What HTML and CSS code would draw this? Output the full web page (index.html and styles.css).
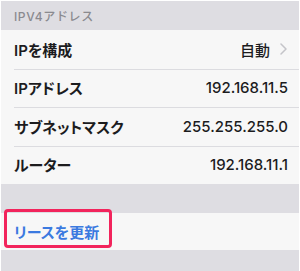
FILE: index.html
```html
<!DOCTYPE html>
<html lang="ja">
<head>
    <meta charset="UTF-8">
    <meta name="viewport" content="width=device-width, initial-scale=1.0">
    <title>IPV4アドレス</title>
    <link rel="stylesheet" href="styles.css">
</head>
<body>
    <div class="settings">
        <div class="settings__header">IPV4アドレス</div>

        <div class="settings__group">
            <div class="settings__row">
                <span class="settings__label">IPを構成</span>
                <span class="settings__value">自動
                    <svg class="settings__chevron" width="7" height="12" viewBox="0 0 7 12">
                        <path d="M1 1 L6 6 L1 11" fill="none" stroke="#c4c4c9" stroke-width="1.5" stroke-linecap="round" stroke-linejoin="round"/>
                    </svg>
                </span>
            </div>
            <div class="settings__row">
                <span class="settings__label">IPアドレス</span>
                <span class="settings__value">192.168.11.5</span>
            </div>
            <div class="settings__row">
                <span class="settings__label">サブネットマスク</span>
                <span class="settings__value">255.255.255.0</span>
            </div>
            <div class="settings__row">
                <span class="settings__label">ルーター</span>
                <span class="settings__value">192.168.11.1</span>
            </div>
        </div>

        <div class="settings__gap"></div>

        <div class="settings__group">
            <div class="settings__row settings__row--action">
                <span class="settings__link">リースを更新</span>
                <div class="highlight"></div>
            </div>
        </div>

        <div class="settings__gap"></div>
    </div>
</body>
</html>
```

FILE: styles.css
```css
body {
    margin: 0;
    background: #ffffff;
    font-family: Inter, "Noto Sans CJK JP", sans-serif;
}

.settings {
    margin: 1px 1px 0 1px;
    background: #dedde2;
    height: 270px;
    overflow: hidden;
}

.settings__header {
    height: 29px;
    display: flex;
    align-items: center;
    padding-left: 13px;
    font-size: 12px;
    font-weight: 500;
    letter-spacing: 0.6px;
    color: #8a8a8f;
}

.settings__group {
    background: #f7f7f7;
}

.settings__row {
    position: relative;
    height: 38.5px;
    display: flex;
    align-items: center;
    justify-content: space-between;
    padding: 0 11px 0 13px;
    box-sizing: border-box;
    font-size: 15px;
    color: #1c1c1e;
    font-feature-settings: "palt";
}

/* separator starts under the text, not at the edge */
.settings__row + .settings__row::before {
    content: "";
    position: absolute;
    top: 0;
    left: 13px;
    right: 0;
    height: 1px;
    background: #dcdce0;
}

.settings__label {
    font-weight: 600;
}

.settings__value {
    display: flex;
    align-items: center;
    gap: 10px;
    font-weight: 500;
}

.settings__chevron {
    margin-right: 1px;
}

.settings__gap {
    height: 29px;
}

.settings__row--action {
    height: 37px;
}

.settings__link {
    color: #3b7ae0;
    font-weight: 600;
}

.highlight {
    position: absolute;
    top: -4px;
    left: 3px;
    width: 108px;
    height: 39px;
    box-sizing: border-box;
    border: 3px solid #f2245c;
    border-radius: 4px;
}
```
